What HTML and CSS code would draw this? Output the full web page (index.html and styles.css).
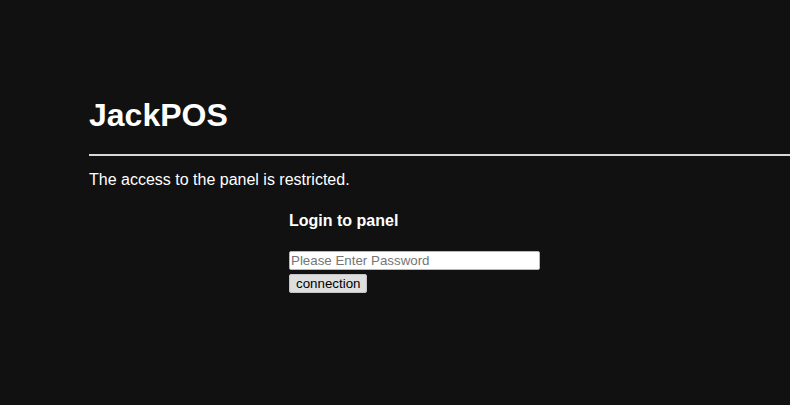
FILE: index.html
```html
<!DOCTYPE html>
<html>
<head>
<meta charset="utf-8">
<link rel="stylesheet" href="styles.css">
</head>
<body>
<div class="page">
  <h1 class="title">JackPOS</h1>
  <hr class="rule">
  <p class="notice">The access to the panel is restricted.</p>
  <div class="login">
    <h3 class="login-title">Login to panel</h3>
    <form class="login-form">
      <input class="password" type="password" placeholder="Please Enter Password">
      <button class="submit" type="button">connection</button>
    </form>
  </div>
</div>
</body>
</html>
```
FILE: styles.css
```css
html, body {
  margin: 0;
  padding: 0;
  background: #111111;
  color: #ffffff;
  font-family: "Liberation Sans", Arial, sans-serif;
  overflow: hidden;
}
.page {
  padding: 76px 0 0 89px;
}
.title {
  font-size: 32px;
  font-weight: bold;
  margin: 21px 0 20px 0;
  line-height: 37px;
}
.rule {
  border: none;
  border-top: 2px solid #d8d8d8;
  margin: 0;
  height: 0;
}
.notice {
  font-size: 16px;
  margin: 15px 0 16px 0;
  line-height: 18px;
}
.login {
  padding-left: 200px;
}
.login-title {
  font-size: 16px;
  font-weight: bold;
  margin: 23px 0 21px 0;
  line-height: 18px;
}
.login-form {
  display: flex;
  flex-direction: column;
  align-items: flex-start;
  gap: 4px;
}
.password {
  box-sizing: border-box;
  width: 251px;
  height: 19px;
  margin: 0;
  padding: 0 1px;
  border: 1px solid #b8b8b8;
  border-radius: 2px;
  background: #ffffff;
  font-family: "Liberation Sans", Arial, sans-serif;
  font-size: 13.33px;
  color: #000;
}
.password::placeholder {
  color: #757575;
}
.submit {
  box-sizing: border-box;
  height: 19px;
  margin: 0;
  padding: 0 6px;
  border: 1px solid #c4c4c4;
  border-radius: 2px;
  background: #dedede;
  color: #000;
  font-family: "Liberation Sans", Arial, sans-serif;
  font-size: 13.33px;
}
```
